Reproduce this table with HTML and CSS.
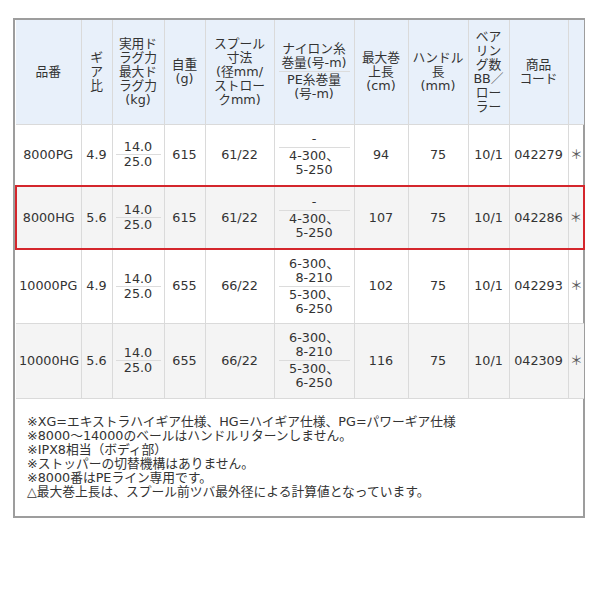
FILE: index.html
```html
<!DOCTYPE html>
<html lang="ja">
<head>
<meta charset="utf-8">
<title>スペック表</title>
<link rel="stylesheet" href="styles.css">
</head>
<body>
<div class="spec">
  <table class="spec-table">
    <colgroup>
      <col class="w-name">
      <col class="w-gear">
      <col class="w-drag">
      <col class="w-weight">
      <col class="w-spool">
      <col class="w-line">
      <col class="w-wind">
      <col class="w-handle">
      <col class="w-bearing">
      <col class="w-code">
      <col class="w-mark">
    </colgroup>
    <thead>
      <tr class="head">
        <th>品番</th>
        <th>ギ<br>ア<br>比</th>
        <th>実用ド<br>ラグ力<br>最大ド<br>ラグ力<br>(kg)</th>
        <th>自重<br>(g)</th>
        <th>スプール<br>寸法<br>(径mm/<br>ストロー<br>クmm)</th>
        <th class="stack wide"><div class="sub">ナイロン糸<br>巻量(号-m)</div><div class="sub">PE糸巻量<br>(号-m)</div></th>
        <th>最大巻<br>上長<br>(cm)</th>
        <th>ハンドル<br>長<br>(mm)</th>
        <th>ベア<br>リン<br>グ数<br>BB／<br>ロー<br>ラー</th>
        <th>商品<br>コード</th>
        <th></th>
      </tr>
    </thead>
    <tbody>
      <tr class="row-1">
        <td>8000PG</td>
        <td>4.9</td>
        <td class="stack"><div class="sub">14.0</div><div class="sub">25.0</div></td>
        <td>615</td>
        <td>61/22</td>
        <td class="stack wide"><div class="sub">-</div><div class="sub">4-300、<br>5-250</div></td>
        <td>94</td>
        <td>75</td>
        <td>10/1</td>
        <td>042279</td>
        <td class="mark">＊</td>
      </tr>
      <tr class="row-2 shade hl">
        <td>8000HG</td>
        <td>5.6</td>
        <td class="stack"><div class="sub">14.0</div><div class="sub">25.0</div></td>
        <td>615</td>
        <td>61/22</td>
        <td class="stack wide"><div class="sub">-</div><div class="sub">4-300、<br>5-250</div></td>
        <td>107</td>
        <td>75</td>
        <td>10/1</td>
        <td>042286</td>
        <td class="mark">＊</td>
      </tr>
      <tr class="row-3">
        <td>10000PG</td>
        <td>4.9</td>
        <td class="stack"><div class="sub">14.0</div><div class="sub">25.0</div></td>
        <td>655</td>
        <td>66/22</td>
        <td class="stack wide"><div class="sub">6-300、<br>8-210</div><div class="sub">5-300、<br>6-250</div></td>
        <td>102</td>
        <td>75</td>
        <td>10/1</td>
        <td>042293</td>
        <td class="mark">＊</td>
      </tr>
      <tr class="row-4 shade">
        <td>10000HG</td>
        <td>5.6</td>
        <td class="stack"><div class="sub">14.0</div><div class="sub">25.0</div></td>
        <td>655</td>
        <td>66/22</td>
        <td class="stack wide"><div class="sub">6-300、<br>8-210</div><div class="sub">5-300、<br>6-250</div></td>
        <td>116</td>
        <td>75</td>
        <td>10/1</td>
        <td>042309</td>
        <td class="mark">＊</td>
      </tr>
    </tbody>
  </table>
  <div class="notes">
    <p>※XG=エキストラハイギア仕様、HG=ハイギア仕様、PG=パワーギア仕様</p>
    <p>※8000～14000のベールはハンドルリターンしません。</p>
    <p>※IPX8相当（ボディ部）</p>
    <p>※ストッパーの切替機構はありません。</p>
    <p>※8000番はPEライン専用です。</p>
    <p>△最大巻上長は、スプール前ツバ最外径による計算値となっています。</p>
  </div>
</div>
</body>
</html>
```

FILE: styles.css
```css
* {
  box-sizing: border-box;
}

html,
body {
  margin: 0;
  padding: 0;
  background: #ffffff;
}

body {
  font-family: "DejaVu Sans", "Noto Sans CJK JP", sans-serif;
  font-size: 12.75px;
  line-height: 14px;
  color: #333333;
}

.spec {
  width: 572px;
  margin: 18px 0 0 13px;
  border: 2px solid #9d9d9d;
}

.spec-table {
  width: 100%;
  border-collapse: collapse;
  table-layout: fixed;
}

.w-name { width: 65px; }
.w-gear { width: 31px; }
.w-drag { width: 52px; }
.w-weight { width: 41px; }
.w-spool { width: 69px; }
.w-line { width: 80px; }
.w-wind { width: 54px; }
.w-handle { width: 60px; }
.w-bearing { width: 41px; }
.w-code { width: 59px; }
.w-mark { width: 16px; }

.spec-table th,
.spec-table td {
  border: 1px solid #dadada;
  padding: 0 3px;
  text-align: center;
  vertical-align: middle;
  font-weight: normal;
  white-space: nowrap;
}

.spec-table tr > :first-child {
  border-left: none;
}

.spec-table tr > :last-child {
  border-right: none;
}

.spec-table thead th {
  background: #e8f0fa;
  border-top: none;
}

.head {
  height: 104px;
}

.row-1 { height: 62px; }
.row-2 { height: 63px; }
.row-3 { height: 74px; }
.row-4 { height: 75px; }

.shade td {
  background: #f4f4f4;
}

.spec-table tr.hl {
  border: 2px solid #d4262c;
}

.stack .sub + .sub {
  border-top: 1px solid #dcdcdc;
}

.spec-table .wide {
  padding: 0 4px;
}

.wide .sub {
  padding: 1px 0;
}

.spec-table .mark {
  padding: 0;
  color: #5c5c5c;
}

.notes {
  padding: 16px 12px 17px 12px;
}

.notes p {
  margin: 0;
  white-space: nowrap;
}
```
